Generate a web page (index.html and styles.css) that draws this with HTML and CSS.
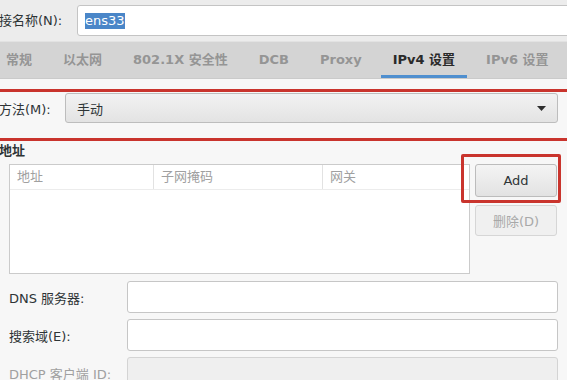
FILE: index.html
```html
<!DOCTYPE html>
<html lang="zh">
<head>
<meta charset="utf-8">
<title>IPv4 设置</title>
<link rel="stylesheet" href="styles.css">
</head>
<body>
<div class="top">
  <span class="top-label">接名称(N):</span>
  <div class="name-input"><span class="sel">ens33</span></div>
</div>
<div class="tabs">
  <span class="tab">常规</span>
  <span class="tab">以太网</span>
  <span class="tab">802.1X 安全性</span>
  <span class="tab">DCB</span>
  <span class="tab">Proxy</span>
  <span class="tab active">IPv4 设置</span>
  <span class="tab">IPv6 设置</span>
</div>
<div class="panel">
  <div class="method-box">
    <span class="method-label">方法(M):</span>
    <div class="combo">
      <span>手动</span>
      <svg class="arrow" width="9" height="5" viewBox="0 0 9 5"><path d="M0 0H9L4.5 5Z" fill="#2e2e2e"/></svg>
    </div>
  </div>
  <div class="addr-title">地址</div>
  <div class="addr-row">
    <div class="table">
      <div class="thead">
        <span class="th c1">地址</span>
        <span class="th c2">子网掩码</span>
        <span class="th c3">网关</span>
      </div>
    </div>
    <div class="btns">
      <div class="add-wrap">
        <button class="btn">Add</button>
        <div class="highlight"></div>
      </div>
      <button class="btn disabled">删除(D)</button>
    </div>
  </div>
  <div class="fields">
    <div class="field"><span class="f-label">DNS 服务器:</span><div class="f-input"></div></div>
    <div class="field"><span class="f-label">搜索域(E):</span><div class="f-input"></div></div>
    <div class="field"><span class="f-label dim">DHCP 客户端 ID:</span><div class="f-input off"></div></div>
  </div>
</div>
</body>
</html>
```
FILE: styles.css
```css
html, body {
  margin: 0;
  padding: 0;
}
body {
  width: 567px;
  height: 380px;
  overflow: hidden;
  background: #f6f6f6;
  font-family: "DejaVu Sans", "Noto Sans CJK SC", sans-serif;
  font-size: 13px;
  color: #2e3436;
}
.top {
  height: 42px;
  background: #ececec;
  display: flex;
  align-items: flex-start;
  box-sizing: border-box;
  padding-top: 5px;
  border-bottom: 1px solid #e2e2e2;
  overflow: hidden;
}
.top-label {
  width: 78px;
  line-height: 31px;
  flex: none;
  margin-left: -1px;
}
.name-input {
  flex: none;
  width: 520px;
  height: 31px;
  box-sizing: border-box;
  background: #fff;
  border: 1px solid #c4c4c4;
  border-radius: 3px;
  padding-left: 7px;
  display: flex;
  align-items: center;
}
.sel {
  background: #4a86c8;
  color: #fff;
  line-height: 16px;
}
.tabs {
  height: 37px;
  background: #d4d4d4;
  display: flex;
  gap: 7px;
  margin-left: -6px;
  box-sizing: border-box;
  border-bottom: 1px solid #cacaca;
  overflow: hidden;
}
.tab {
  padding: 0 12px;
  line-height: 36px;
  font-weight: bold;
  color: #959595;
  white-space: nowrap;
  box-sizing: border-box;
  height: 36px;
}
.tab.active {
  color: #2a2a2a;
  border-bottom: 3px solid #4f8fcf;
}
.panel {
  padding-top: 10px;
  background: #f7f7f7;
}
.method-box {
  border-top: 3px solid #c9342d;
  border-bottom: 3px solid #c9342d;
  display: flex;
  align-items: center;
  padding: 1px 9px 15px 0;
}
.method-label {
  width: 66px;
  flex: none;
  margin-left: -1px;
}
.combo {
  flex: 1;
  height: 30px;
  box-sizing: border-box;
  border: 1px solid #bdbdbd;
  border-radius: 3px;
  background: linear-gradient(#f2f2f2, #e3e3e3);
  display: flex;
  align-items: center;
  justify-content: space-between;
  padding: 0 11px 0 11px;
}
.arrow {
  display: block;
}
.addr-title {
  font-weight: bold;
  line-height: 18px;
  margin-top: 1px;
  margin-left: -1px;
}
.addr-row {
  display: flex;
  gap: 5px;
  padding: 4px 10px 0 9px;
}
.table {
  width: 461px;
  height: 110px;
  box-sizing: border-box;
  background: #fff;
  border: 1px solid #cbcbcb;
  flex: none;
}
.thead {
  display: flex;
  height: 24px;
  border-bottom: 1px solid #ececec;
}
.th {
  color: #a0a0a0;
  line-height: 24px;
  padding-left: 7px;
  box-sizing: border-box;
}
.c1 { width: 144px; border-right: 1px solid #e2e2e2; }
.c2 { width: 169px; border-right: 1px solid #e2e2e2; }
.c3 { flex: 1; }
.btns {
  width: 82px;
  display: flex;
  flex-direction: column;
  gap: 8px;
}
.add-wrap {
  position: relative;
}
.btn {
  width: 82px;
  height: 33px;
  box-sizing: border-box;
  border: 1px solid #bcbcbc;
  border-radius: 3px;
  background: linear-gradient(#f4f4f4, #e2e2e2);
  font-family: "DejaVu Sans", "Noto Sans CJK SC", sans-serif;
  font-size: 13px;
  color: #2e3436;
  padding: 0;
  display: block;
}
.btn.disabled {
  height: 31px;
  background: #f0f0f0;
  border-color: #d6d6d6;
  color: #a8a8a8;
}
.highlight {
  position: absolute;
  left: -14px;
  top: -10px;
  right: -4px;
  bottom: -6px;
  border: 3px solid #c9342d;
  border-radius: 2px;
  pointer-events: none;
}
.fields {
  display: flex;
  flex-direction: column;
  gap: 6px;
  padding: 7px 9px 0 9px;
}
.field {
  display: flex;
  align-items: center;
}
.f-label {
  width: 118px;
  flex: none;
}
.f-label.dim {
  color: #a0a0a0;
}
.f-input {
  flex: 1;
  height: 32px;
  box-sizing: border-box;
  background: #fff;
  border: 1px solid #c6c6c6;
  border-radius: 3px;
}
.f-input.off {
  background: #efefef;
  border-color: #d4d4d4;
}
```
